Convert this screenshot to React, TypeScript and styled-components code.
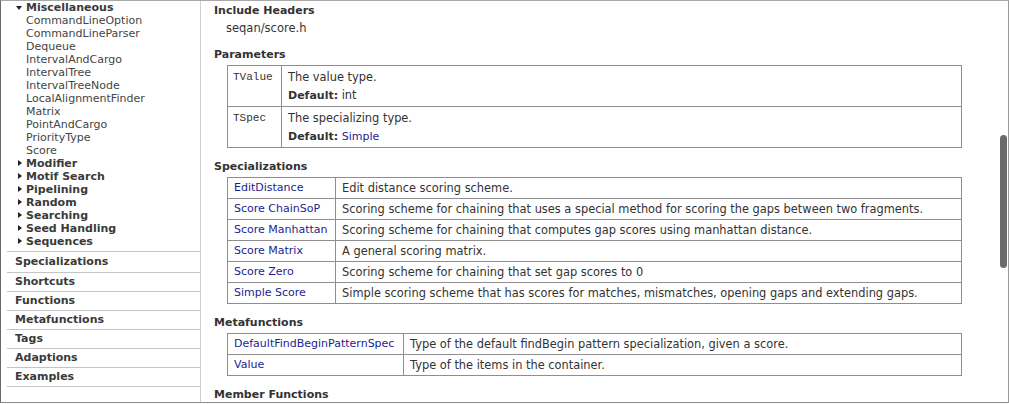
import React from "react"
import styled, { createGlobalStyle } from "styled-components"

const GlobalStyle = createGlobalStyle`
  html, body {
    margin: 0;
    padding: 0;
    background: #ffffff;
    overflow: hidden;
  }
  body {
    font-family: "DejaVu Sans", Verdana, sans-serif;
    font-size: 11px;
    color: #333333;
  }
`

const Frame = styled.div`
  box-sizing: border-box;
  width: 1009px;
  height: 403px;
  border-top: 1px solid #a8a8a8;
  border-left: 1px solid #6a6a6a;
  border-right: 1px solid #9a9a9a;
  border-bottom: 1px solid #8a8a8a;
  display: flex;
  overflow: hidden;
`

const Sidebar = styled.nav`
  flex: 0 0 199px;
  border-right: 1px solid #cfcfcf;
  display: flex;
  flex-direction: column;
`

const Tree = styled.ul`
  list-style: none;
  margin: 0 0 3px;
  padding: 0 0 0 15px;
`

const TreeRow = styled.li<{ $group?: boolean }>`
  display: flex;
  align-items: center;
  height: 13px;
  line-height: 13px;
  font-weight: ${(p) => (p.$group ? "bold" : "normal")};
  color: ${(p) => (p.$group ? "#3a3a3a" : "#444444")};
  white-space: nowrap;
`

const Twisty = styled.span<{ $state: "open" | "closed" | "none" }>`
  flex: 0 0 10px;
  height: 13px;
  position: relative;

  &::before {
    content: "";
    position: absolute;
    ${(p) =>
      p.$state === "open"
        ? `left: 0; top: 5px; border-left: 3.5px solid transparent; border-right: 3.5px solid transparent; border-top: 4px solid #222;`
        : p.$state === "closed"
        ? `left: 2px; top: 3px; border-top: 3px solid transparent; border-bottom: 3px solid transparent; border-left: 4px solid #222;`
        : `display: none;`}
  }
`

const Sections = styled.ul`
  list-style: none;
  margin: 0 0 0 6px;
  padding: 0;
  border-top: 1px solid #c4c4c4;
`

const SectionItem = styled.li`
  height: 18px;
  line-height: 18px;
  padding-left: 8px;
  border-bottom: 1px solid #c4c4c4;
  font-weight: bold;
  color: #3a3a3a;

  &:first-child {
    height: 20px;
    line-height: 20px;
  }
`

const Main = styled.main`
  flex: 1;
  position: relative;
  padding: 1px 46px 0 13px;
  overflow: hidden;
`

const Heading = styled.h3`
  margin: 11px 0 2px;
  font-size: 11px;
  line-height: 16px;
  font-weight: bold;
  color: #333333;

  &:first-child {
    margin-top: 1px;
    margin-bottom: 1px;
  }
`

const Header = styled.div`
  padding-left: 12px;
  font-size: 11.5px;
  line-height: 16px;
  color: #333333;
`

const Table = styled.table`
  margin-left: 13px;
  width: calc(100% - 13px);
  border-collapse: collapse;
  table-layout: fixed;
`

const Col = styled.col<{ $w?: number }>`
  width: ${(p) => (p.$w ? `${p.$w}px` : "auto")};
`

type CellKind = "mono" | "key" | "stack" | "text"

const Cell = styled.td<{ $kind?: CellKind }>`
  height: 16px;
  border: 1px solid #8e8e8e;
  padding: ${(p) => (p.$kind === "mono" ? "3px 5px 2px" : p.$kind === "stack" ? "3px 6px 2px" : "2px 6px")};
  line-height: 16px;
  vertical-align: top;
  white-space: nowrap;
  overflow: hidden;
  color: #333333;
  font-family: ${(p) => (p.$kind === "mono" ? `"Liberation Mono", "Courier New", monospace` : "inherit")};
  font-size: ${(p) => (p.$kind === "mono" || p.$kind === "key" ? "11px" : "11.4px")};
`

const ParamText = styled.div`
  height: 17px;
  line-height: 17px;

  & + & {
    margin-top: 1px;
  }
`

const Strong = styled.b`
  font-size: 11px;
  font-weight: bold;
`

const Link = styled.a<{ $small?: boolean }>`
  color: #1d1d92;
  font-size: ${(p) => (p.$small ? "11px" : "inherit")};
  text-decoration: none;
`

const Scrollbar = styled.div`
  position: absolute;
  right: 1px;
  top: 134px;
  width: 7px;
  height: 133px;
  border-radius: 4px;
  background: #6b6b6b;
`

type TreeEntry = { label: string; state: "open" | "closed" | "none"; group?: boolean }

const tree: TreeEntry[] = [
  { label: "Miscellaneous", state: "open", group: true },
  { label: "CommandLineOption", state: "none" },
  { label: "CommandLineParser", state: "none" },
  { label: "Dequeue", state: "none" },
  { label: "IntervalAndCargo", state: "none" },
  { label: "IntervalTree", state: "none" },
  { label: "IntervalTreeNode", state: "none" },
  { label: "LocalAlignmentFinder", state: "none" },
  { label: "Matrix", state: "none" },
  { label: "PointAndCargo", state: "none" },
  { label: "PriorityType", state: "none" },
  { label: "Score", state: "none" },
  { label: "Modifier", state: "closed", group: true },
  { label: "Motif Search", state: "closed", group: true },
  { label: "Pipelining", state: "closed", group: true },
  { label: "Random", state: "closed", group: true },
  { label: "Searching", state: "closed", group: true },
  { label: "Seed Handling", state: "closed", group: true },
  { label: "Sequences", state: "closed", group: true },
]

const sections = ["Specializations", "Shortcuts", "Functions", "Metafunctions", "Tags", "Adaptions", "Examples"]

const specializations = [
  ["EditDistance", "Edit distance scoring scheme."],
  ["Score ChainSoP", "Scoring scheme for chaining that uses a special method for scoring the gaps between two fragments."],
  ["Score Manhattan", "Scoring scheme for chaining that computes gap scores using manhattan distance."],
  ["Score Matrix", "A general scoring matrix."],
  ["Score Zero", "Scoring scheme for chaining that set gap scores to 0"],
  ["Simple Score", "Simple scoring scheme that has scores for matches, mismatches, opening gaps and extending gaps."],
]

const metafunctions = [
  ["DefaultFindBeginPatternSpec", "Type of the default findBegin pattern specialization, given a score."],
  ["Value", "Type of the items in the container."],
]

function RefTable({ keyWidth, rows }: { keyWidth: number; rows: string[][] }) {
  return (
    <Table>
      <colgroup>
        <Col $w={keyWidth} />
        <Col />
      </colgroup>
      <tbody>
        {rows.map(([name, desc]) => (
          <tr key={name}>
            <Cell $kind="key">
              <Link href="#">{name}</Link>
            </Cell>
            <Cell $kind="text">{desc}</Cell>
          </tr>
        ))}
      </tbody>
    </Table>
  )
}

export default function App() {
  return (
    <>
      <GlobalStyle />
      <Frame>
        <Sidebar>
          <Tree>
            {tree.map((t) => (
              <TreeRow key={t.label} $group={t.group}>
                <Twisty $state={t.state} />
                {t.label}
              </TreeRow>
            ))}
          </Tree>
          <Sections>
            {sections.map((s) => (
              <SectionItem key={s}>{s}</SectionItem>
            ))}
          </Sections>
        </Sidebar>

        <Main>
          <Heading>Include Headers</Heading>
          <Header>seqan/score.h</Header>

          <Heading>Parameters</Heading>
          <Table>
            <colgroup>
              <Col $w={54} />
              <Col />
            </colgroup>
            <tbody>
              <tr>
                <Cell $kind="mono">TValue</Cell>
                <Cell $kind="stack">
                  <ParamText>The value type.</ParamText>
                  <ParamText>
                    <Strong>Default:</Strong> int
                  </ParamText>
                </Cell>
              </tr>
              <tr>
                <Cell $kind="mono">TSpec</Cell>
                <Cell $kind="stack">
                  <ParamText>The specializing type.</ParamText>
                  <ParamText>
                    <Strong>Default:</Strong> <Link href="#" $small>Simple</Link>
                  </ParamText>
                </Cell>
              </tr>
            </tbody>
          </Table>

          <Heading>Specializations</Heading>
          <RefTable keyWidth={108} rows={specializations} />

          <Heading>Metafunctions</Heading>
          <RefTable keyWidth={176} rows={metafunctions} />

          <Heading>Member Functions</Heading>
          <Scrollbar />
        </Main>
      </Frame>
    </>
  )
}
